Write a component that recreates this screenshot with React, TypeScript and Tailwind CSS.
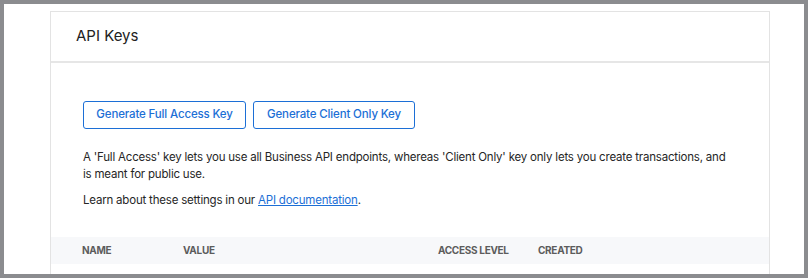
export default function App() {
  return (
    <div className="h-[278px] w-[808px] overflow-hidden bg-[#8b8c8f] p-[4px] font-['Inter',sans-serif]">
      <div className="h-[270px] overflow-hidden bg-white pl-[46px] pr-[34px] pt-[7px]">
        <div className="h-[270px] border border-[#e3e3e3] bg-white">
          <header className="flex h-[51px] items-center border-b-2 border-[#e6e6e6] px-[25px]">
            <h1 className="text-[15px] text-[#222]">API Keys</h1>
          </header>

          <div className="pl-[32px] pr-[37px] pt-[38px]">
            <div className="flex gap-[7px]">
              <button className="h-[28px] w-[163px] rounded-[3px] border-[1.5px] border-[#1c6fd6] text-[11.5px] font-medium tracking-[-0.15px] text-[#1c6fd6]">
                Generate Full Access Key
              </button>
              <button className="h-[28px] w-[162px] rounded-[3px] border-[1.5px] border-[#1c6fd6] text-[11.5px] font-medium tracking-[-0.15px] text-[#1c6fd6]">
                Generate Client Only Key
              </button>
            </div>
            <p className="mt-[20px] text-[11.5px] leading-[17px] tracking-[-0.2px] text-[#262626]">
              A 'Full Access' key lets you use all Business API endpoints, whereas 'Client Only' key only lets you
              create transactions, and is meant for public use.
            </p>
            <p className="mt-[9px] text-[11.5px] leading-[17px] tracking-[-0.2px] text-[#262626]">
              Learn about these settings in our{" "}
              <a href="#" className="text-[#1c6fd6] underline">
                API documentation
              </a>
              .
            </p>
          </div>

          <div className="mt-[28px] flex h-[27px] items-center bg-[#f7f8fa] pl-[31px] text-[10px] font-bold tracking-[-0.3px] text-[#5c5c5c]">
            <div className="w-[101px]">NAME</div>
            <div className="w-[255px]">VALUE</div>
            <div className="w-[100px]">ACCESS LEVEL</div>
            <div className="flex-1">CREATED</div>
          </div>
        </div>
      </div>
    </div>
  );
}
